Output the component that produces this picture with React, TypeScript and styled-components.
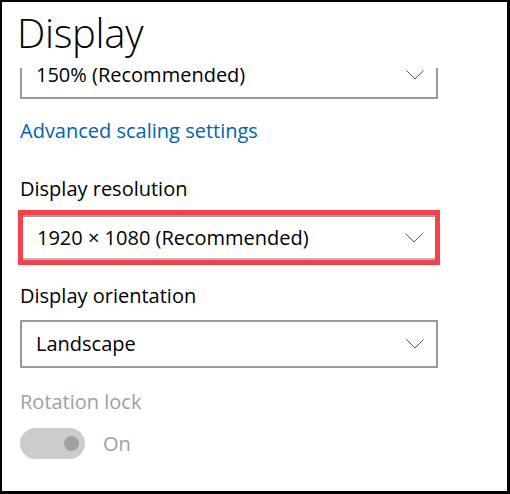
import styled, { createGlobalStyle } from "styled-components";

const GlobalStyle = createGlobalStyle`
    html, body {
        margin: 0;
        padding: 0;
        background: #000;
    }
    body {
        font-family: "Open Sans", "Noto Sans", "Liberation Sans", sans-serif;
        color: #000;
    }
`;

const Window = styled.div`
    width: 510px;
    height: 494px;
    box-sizing: border-box;
    border-style: solid;
    border-color: #000;
    border-width: 2px 3px 3px 2px;
    background: #fff;
    display: flex;
    flex-direction: column;
    overflow: hidden;
`;

const Header = styled.div`
    height: 66px;
    flex-shrink: 0;
    padding: 3px 0 0 15px;
    box-sizing: border-box;
`;

const Title = styled.h1`
    margin: 0;
    font-weight: 300;
    font-size: 40px;
    line-height: 56px;
    letter-spacing: -0.3px;
`;

const Scroll = styled.div`
    flex: 1;
    overflow: hidden;
    padding-left: 16px;
`;

const Content = styled.div`
    display: flex;
    flex-direction: column;
    align-items: flex-start;
    margin-top: -17px;
`;

const Dropdown = styled.div<{ $highlight?: boolean; $gap?: number }>`
    box-sizing: border-box;
    width: ${(p) => (p.$highlight ? 422 : 418)}px;
    height: ${(p) => (p.$highlight ? 55 : 48)}px;
    margin-left: ${(p) => (p.$highlight ? 0 : 2)}px;
    margin-top: ${(p) => p.$gap ?? 0}px;
    border: ${(p) => (p.$highlight ? "5px solid #f5414a" : "2px solid #999")};
    box-shadow: ${(p) =>
        p.$highlight ? "inset 0 2px 0 #a0a0a0, inset 0 -2px 0 #b8b8b8" : "none"};
    display: flex;
    align-items: center;
    justify-content: space-between;
    padding: 0 12px 0 14px;
    font-size: 20px;
    line-height: 28px;
`;

const Chevron = () => (
    <svg width="18" height="10" viewBox="0 0 18 10">
        <path d="M0.5 0.5 L9 9 L17.5 0.5" fill="none" stroke="#555" strokeWidth="1" />
    </svg>
);

const Link = styled.a<{ $gap: number }>`
    margin-top: ${(p) => p.$gap}px;
    margin-left: 2px;
    font-size: 20px;
    line-height: 28px;
    color: #0063b1;
    text-decoration: none;
`;

const Label = styled.div<{ $gap: number; $disabled?: boolean }>`
    margin-top: ${(p) => p.$gap}px;
    margin-left: 2px;
    font-size: 20px;
    line-height: 28px;
    color: ${(p) => (p.$disabled ? "#a0a0a0" : "#000")};
`;

const ToggleRow = styled.div`
    margin-top: 12px;
    margin-left: 2px;
    display: flex;
    align-items: center;
    gap: 18px;
    font-size: 20px;
    line-height: 28px;
    color: #a0a0a0;
`;

const Track = styled.div`
    width: 65px;
    height: 31px;
    border-radius: 16px;
    background: #cccccc;
    display: flex;
    align-items: center;
    justify-content: flex-end;
    padding-right: 6px;
    box-sizing: border-box;
`;

const Knob = styled.div`
    width: 15px;
    height: 15px;
    border-radius: 50%;
    background: #a0a0a0;
`;

export default function App() {
    return (
        <>
            <GlobalStyle />
            <Window>
                <Header>
                    <Title>Display</Title>
                </Header>
                <Scroll>
                    <Content>
                        <Dropdown>
                            <span>150% (Recommended)</span>
                            <Chevron />
                        </Dropdown>
                        <Link href="#" $gap={18}>Advanced scaling settings</Link>
                        <Label $gap={30}>Display resolution</Label>
                        <Dropdown $highlight $gap={7}>
                            <span>1920 × 1080 (Recommended)</span>
                            <Chevron />
                        </Dropdown>
                        <Label $gap={17}>Display orientation</Label>
                        <Dropdown $gap={10}>
                            <span>Landscape</span>
                            <Chevron />
                        </Dropdown>
                        <Label $gap={20} $disabled>Rotation lock</Label>
                        <ToggleRow>
                            <Track>
                                <Knob />
                            </Track>
                            <span>On</span>
                        </ToggleRow>
                    </Content>
                </Scroll>
            </Window>
        </>
    );
}
